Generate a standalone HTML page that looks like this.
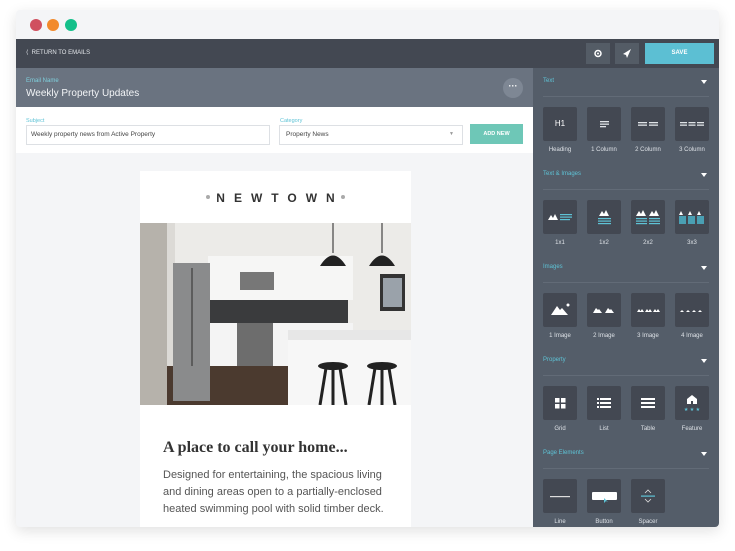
<!DOCTYPE html>
<html><head><meta charset="utf-8"><style>
*{margin:0;padding:0;box-sizing:border-box}
body{width:735px;height:551px;background:#fff;font-family:"Liberation Sans",sans-serif;position:relative;overflow:hidden}
.win{position:absolute;left:16px;top:10px;width:703px;height:517px;background:#f4f5f7;box-shadow:0 4px 14px rgba(0,0,0,.12);border-radius:4px;overflow:hidden}
.dot{position:absolute;top:9px;width:12px;height:12px;border-radius:50%}
.abs{position:absolute}
.top{left:0;top:29px;width:703px;height:29px;background:#434852}
.tile{position:absolute;width:34px;height:34px;background:#434852;border-radius:2px}
.lbl{position:absolute;width:34px;text-align:center;font-size:6px;color:#dde1e6}
.sec{position:absolute;left:10px;font-size:6px;color:#5ec3d6}
.arr{position:absolute;right:12px;width:0;height:0;border-left:3px solid transparent;border-right:3px solid transparent;border-top:4px solid #fff}
.line{position:absolute;left:10px;right:10px;height:1px;background:#626b77}
.nd{display:inline-block;width:4px;height:4px;border-radius:50%;background:#aaa;vertical-align:middle;margin:0 6px 3px}
</style></head><body>
<div class="win">
 <div class="dot" style="left:14px;background:#d0505f"></div>
 <div class="dot" style="left:31px;background:#f28a2c"></div>
 <div class="dot" style="left:49px;background:#14c08a"></div>
 <div class="abs top">
  <div class="abs" style="left:10px;top:10px;font-size:6px;color:#e2e5e9">&#10216;&nbsp; RETURN TO EMAILS</div>
  <div class="abs" style="left:570px;top:4px;width:24px;height:21px;background:#545c66"><svg width="24" height="21"><circle cx="12" cy="10.5" r="3" fill="none" stroke="#fff" stroke-width="1.5"/><circle cx="12" cy="10.5" r="1" fill="#fff"/></svg></div>
  <div class="abs" style="left:599px;top:4px;width:24px;height:21px;background:#545c66"><svg width="24" height="21"><path d="M16 6 L8 11 L11 12 L12 15 Z" fill="#fff"/></svg></div>
  <div class="abs" style="left:629px;top:4px;width:69px;height:21px;background:#5cbfd3;color:#fff;font-size:6px;font-weight:bold;text-align:center;padding-top:7px">SAVE</div>
 </div>
 <div class="abs" style="left:0;top:58px;width:517px;height:39px;background:#6a7380">
  <div class="abs" style="left:10px;top:10px;font-size:6px;color:#7fd0dd">Email Name</div>
  <div class="abs" style="left:10px;top:20px;font-size:10px;color:#f2f4f6">Weekly Property Updates</div>
  <div class="abs" style="left:487px;top:10px;width:20px;height:20px;border-radius:50%;background:#7e8794;color:#fff;font-size:9px;text-align:center;line-height:17px;font-weight:bold">···</div>
 </div>
 <div class="abs" style="left:0;top:97px;width:517px;height:46px;background:#fff">
  <div class="abs" style="left:10px;top:11px;font-size:5.5px;color:#5ec3d6">Subject</div>
  <div class="abs" style="left:10px;top:18px;width:244px;height:20px;border:1px solid #dde0e4;font-size:6.5px;color:#444;padding:5px 4px">Weekly property news from Active Property</div>
  <div class="abs" style="left:264px;top:11px;font-size:5.5px;color:#5ec3d6">Category</div>
  <div class="abs" style="left:263px;top:18px;width:184px;height:20px;border:1px solid #dde0e4;font-size:6.5px;color:#444;padding:5px 6px">Property News<span style="position:absolute;right:8px;color:#999;font-size:5px">▼</span></div>
  <div class="abs" style="left:454px;top:17px;width:53px;height:20px;background:#6ec7b7;color:#fff;font-size:5.5px;font-weight:bold;text-align:center;line-height:20px">ADD NEW</div>
 </div>
 <div class="abs" style="left:124px;top:161px;width:271px;height:360px;background:#fff">
  <div class="abs" style="left:0;top:20px;width:271px;text-align:center;font-size:12px;font-weight:bold;letter-spacing:9px;color:#333"><span class="nd"></span>NEWTOWN<span class="nd" style="margin-left:-3px"></span></div>
  <svg class="abs" style="left:0;top:52px" width="271" height="182">
   <rect width="271" height="182" fill="#ecebe8"/>
   <rect x="0" y="0" width="27" height="182" fill="#b6b2ab"/>
   <rect x="27" y="0" width="8" height="182" fill="#dcdad6"/>
   <rect x="68" y="33" width="145" height="44" fill="#f6f6f5"/>
   <rect x="68" y="77" width="140" height="24" fill="#3a3b3d"/>
   <rect x="100" y="49" width="34" height="18" fill="#777"/>
   <rect x="68" y="100" width="145" height="43" fill="#f4f4f4"/>
   <rect x="97" y="100" width="36" height="44" fill="#6d6d6d"/>
   <rect x="33" y="40" width="37" height="138" fill="#8a8b8c"/>
   <rect x="51" y="45" width="2" height="130" fill="#5c5c5c"/>
   <rect x="0" y="143" width="271" height="39" fill="#4b3a2f"/>
   <rect x="0" y="143" width="27" height="39" fill="#b6b2ab"/>
   <rect x="33" y="143" width="37" height="35" fill="#8a8b8c"/>
   <rect x="148" y="107" width="123" height="75" fill="#f7f7f7"/>
   <rect x="148" y="107" width="123" height="10" fill="#e7e7e7"/>
   <rect x="240" y="51" width="25" height="37" fill="#333"/><rect x="243" y="55" width="19" height="29" fill="#9aa2aa"/>
   <line x1="193" y1="0" x2="193" y2="30" stroke="#222"/><path d="M180 43 Q193 22 206 43Z" fill="#222"/>
   <line x1="242" y1="0" x2="242" y2="30" stroke="#222"/><path d="M229 43 Q242 22 255 43Z" fill="#222"/>
   <ellipse cx="193" cy="143" rx="15" ry="4" fill="#222"/><path d="M186 145 L180 182 M200 145 L206 182 M193 145 L193 182" stroke="#222" stroke-width="3"/>
   <ellipse cx="242" cy="143" rx="15" ry="4" fill="#222"/><path d="M235 145 L229 182 M249 145 L255 182 M242 145 L242 182" stroke="#222" stroke-width="3"/>
  </svg>
  <div class="abs" style="left:23px;top:268px;font-family:'Liberation Serif',serif;font-size:16px;font-weight:bold;color:#333">A place to call your home...</div>
  <div class="abs" style="left:23px;top:296px;width:235px;font-size:11px;line-height:17px;color:#555">Designed for entertaining, the spacious living and dining areas open to a partially-enclosed heated swimming pool with solid timber deck.</div>
 </div>
 <div class="abs" style="left:517px;top:58px;width:186px;height:459px;background:#545d69">
  <div class="sec" style="top:10px">Text</div><div class="arr" style="top:12px"></div><div class="line" style="top:28px"></div>
  <div class="sec" style="top:103px">Text &amp; Images</div><div class="arr" style="top:105px"></div><div class="line" style="top:121px"></div>
  <div class="sec" style="top:196px">Images</div><div class="arr" style="top:198px"></div><div class="line" style="top:214px"></div>
  <div class="sec" style="top:289px">Property</div><div class="arr" style="top:291px"></div><div class="line" style="top:307px"></div>
  <div class="sec" style="top:382px">Page Elements</div><div class="arr" style="top:384px"></div><div class="line" style="top:400px"></div>

  <div class="tile" style="left:10px;top:39px;color:#fff;font-size:8px;text-align:center;line-height:34px">H1</div>
  <div class="tile" style="left:54px;top:39px"><svg width="34" height="34" fill="#dfe3e7"><rect x="13" y="14" width="9" height="1.3"/><rect x="13" y="16.5" width="9" height="1.3"/><rect x="13" y="19" width="6" height="1.3"/></svg></div>
  <div class="tile" style="left:98px;top:39px"><svg width="34" height="34" fill="#dfe3e7"><rect x="7" y="15" width="9" height="1.3"/><rect x="7" y="17.5" width="9" height="1.3"/><rect x="18" y="15" width="9" height="1.3"/><rect x="18" y="17.5" width="9" height="1.3"/></svg></div>
  <div class="tile" style="left:142px;top:39px"><svg width="34" height="34" fill="#dfe3e7"><rect x="5" y="15" width="7" height="1.3"/><rect x="5" y="17.5" width="7" height="1.3"/><rect x="13.5" y="15" width="7" height="1.3"/><rect x="13.5" y="17.5" width="7" height="1.3"/><rect x="22" y="15" width="7" height="1.3"/><rect x="22" y="17.5" width="7" height="1.3"/></svg></div>
  <div class="lbl" style="left:10px;top:79px">Heading</div><div class="lbl" style="left:54px;top:79px">1 Column</div><div class="lbl" style="left:98px;top:79px">2 Column</div><div class="lbl" style="left:142px;top:79px">3 Column</div>

  <div class="tile" style="left:10px;top:132px"><svg width="34" height="34"><path d="M5 20 L8 15 L10 18 L12 14 L15 20Z" fill="#fff"/><g fill="#5ec3d6"><rect x="17" y="14" width="12" height="1.2"/><rect x="17" y="16.5" width="12" height="1.2"/><rect x="17" y="19" width="10" height="1.2"/></g></svg></div>
  <div class="tile" style="left:54px;top:132px"><svg width="34" height="34"><path d="M12 16 L15 11 L17 14 L19 10 L22 16Z" fill="#fff"/><g fill="#5ec3d6"><rect x="11" y="18" width="13" height="1.2"/><rect x="11" y="20.5" width="13" height="1.2"/><rect x="11" y="23" width="13" height="1.2"/></g></svg></div>
  <div class="tile" style="left:98px;top:132px"><svg width="34" height="34"><path d="M5 16 L8 11 L10 14 L12 10 L15 16Z M18 16 L21 11 L23 14 L25 10 L28 16Z" fill="#fff"/><g fill="#5ec3d6"><rect x="5" y="18" width="11" height="1.2"/><rect x="5" y="20.5" width="11" height="1.2"/><rect x="5" y="23" width="11" height="1.2"/><rect x="18" y="18" width="11" height="1.2"/><rect x="18" y="20.5" width="11" height="1.2"/><rect x="18" y="23" width="11" height="1.2"/></g></svg></div>
  <div class="tile" style="left:142px;top:132px"><svg width="34" height="34"><path d="M4 15 L6 11 L8 15Z M13 15 L15 11 L17 15Z M22 15 L24 11 L26 15Z" fill="#fff"/><g fill="#4a9fb3"><rect x="4" y="16" width="7" height="8"/><rect x="13" y="16" width="7" height="8"/><rect x="22" y="16" width="7" height="8"/></g></svg></div>
  <div class="lbl" style="left:10px;top:172px">1x1</div><div class="lbl" style="left:54px;top:172px">1x2</div><div class="lbl" style="left:98px;top:172px">2x2</div><div class="lbl" style="left:142px;top:172px">3x3</div>

  <div class="tile" style="left:10px;top:225px"><svg width="34" height="34"><path d="M8 22 L14 13 L17 17 L19 15 L25 22Z" fill="#fff"/><circle cx="25" cy="12" r="1.5" fill="#fff"/></svg></div>
  <div class="tile" style="left:54px;top:225px"><svg width="34" height="34" fill="#fff"><path d="M6 20 L9 15 L11 17 L12 16 L15 20Z M18 20 L21 15 L23 17 L24 16 L27 20Z"/></svg></div>
  <div class="tile" style="left:98px;top:225px"><svg width="34" height="34" fill="#fff"><path d="M6 19 L8 16 L10 19Z M9 19 L11 16 L13 19Z M14 19 L16 16 L18 19Z M17 19 L19 16 L21 19Z M22 19 L24 16 L26 19Z M25 19 L27 16 L29 19Z"/></svg></div>
  <div class="tile" style="left:142px;top:225px"><svg width="34" height="34" fill="#fff"><path d="M5 19 L7 17 L9 19Z M11 19 L13 17 L15 19Z M17 19 L19 17 L21 19Z M23 19 L25 17 L27 19Z"/></svg></div>
  <div class="lbl" style="left:10px;top:265px">1 Image</div><div class="lbl" style="left:54px;top:265px">2 Image</div><div class="lbl" style="left:98px;top:265px">3 Image</div><div class="lbl" style="left:142px;top:265px">4 Image</div>

  <div class="tile" style="left:10px;top:318px"><svg width="34" height="34" fill="#fff"><rect x="12" y="12" width="4.5" height="4.5"/><rect x="18" y="12" width="4.5" height="4.5"/><rect x="12" y="18" width="4.5" height="4.5"/><rect x="18" y="18" width="4.5" height="4.5"/></svg></div>
  <div class="tile" style="left:54px;top:318px"><svg width="34" height="34" fill="#fff"><rect x="10" y="12" width="2" height="2"/><rect x="13" y="12" width="11" height="2"/><rect x="10" y="16" width="2" height="2"/><rect x="13" y="16" width="11" height="2"/><rect x="10" y="20" width="2" height="2"/><rect x="13" y="20" width="11" height="2"/></svg></div>
  <div class="tile" style="left:98px;top:318px"><svg width="34" height="34" fill="#fff"><rect x="10" y="12" width="14" height="2"/><rect x="10" y="16" width="14" height="2"/><rect x="10" y="20" width="14" height="2"/></svg></div>
  <div class="tile" style="left:142px;top:318px"><svg width="34" height="34"><path d="M17 9 L22 13 L22 18 L12 18 L12 13Z" fill="#fff"/><rect x="16" y="15" width="2" height="3" fill="#434852"/><text x="17" y="25" font-size="5" fill="#5ec3d6" text-anchor="middle">★ ★ ★</text></svg></div>
  <div class="lbl" style="left:10px;top:358px">Grid</div><div class="lbl" style="left:54px;top:358px">List</div><div class="lbl" style="left:98px;top:358px">Table</div><div class="lbl" style="left:142px;top:358px">Feature</div>

  <div class="tile" style="left:10px;top:411px"><svg width="34" height="34"><rect x="7" y="17" width="20" height="1.2" fill="#ddd"/></svg></div>
  <div class="tile" style="left:54px;top:411px"><svg width="34" height="34"><rect x="5" y="13" width="25" height="8" rx="1" fill="#fff"/><path d="M17 19 L17 24 L19 22 L21 23Z" fill="#5ec3d6"/></svg></div>
  <div class="tile" style="left:98px;top:411px"><svg width="34" height="34"><path d="M14 14 L17 11 L20 14 M14 20 L17 23 L20 20" fill="none" stroke="#ddd" stroke-width="0.8"/><rect x="10" y="16.5" width="14" height="1.2" fill="#5ec3d6"/></svg></div>
  <div class="lbl" style="left:10px;top:451px">Line</div><div class="lbl" style="left:54px;top:451px">Button</div><div class="lbl" style="left:98px;top:451px">Spacer</div>
 </div>
</div>
</body></html>
